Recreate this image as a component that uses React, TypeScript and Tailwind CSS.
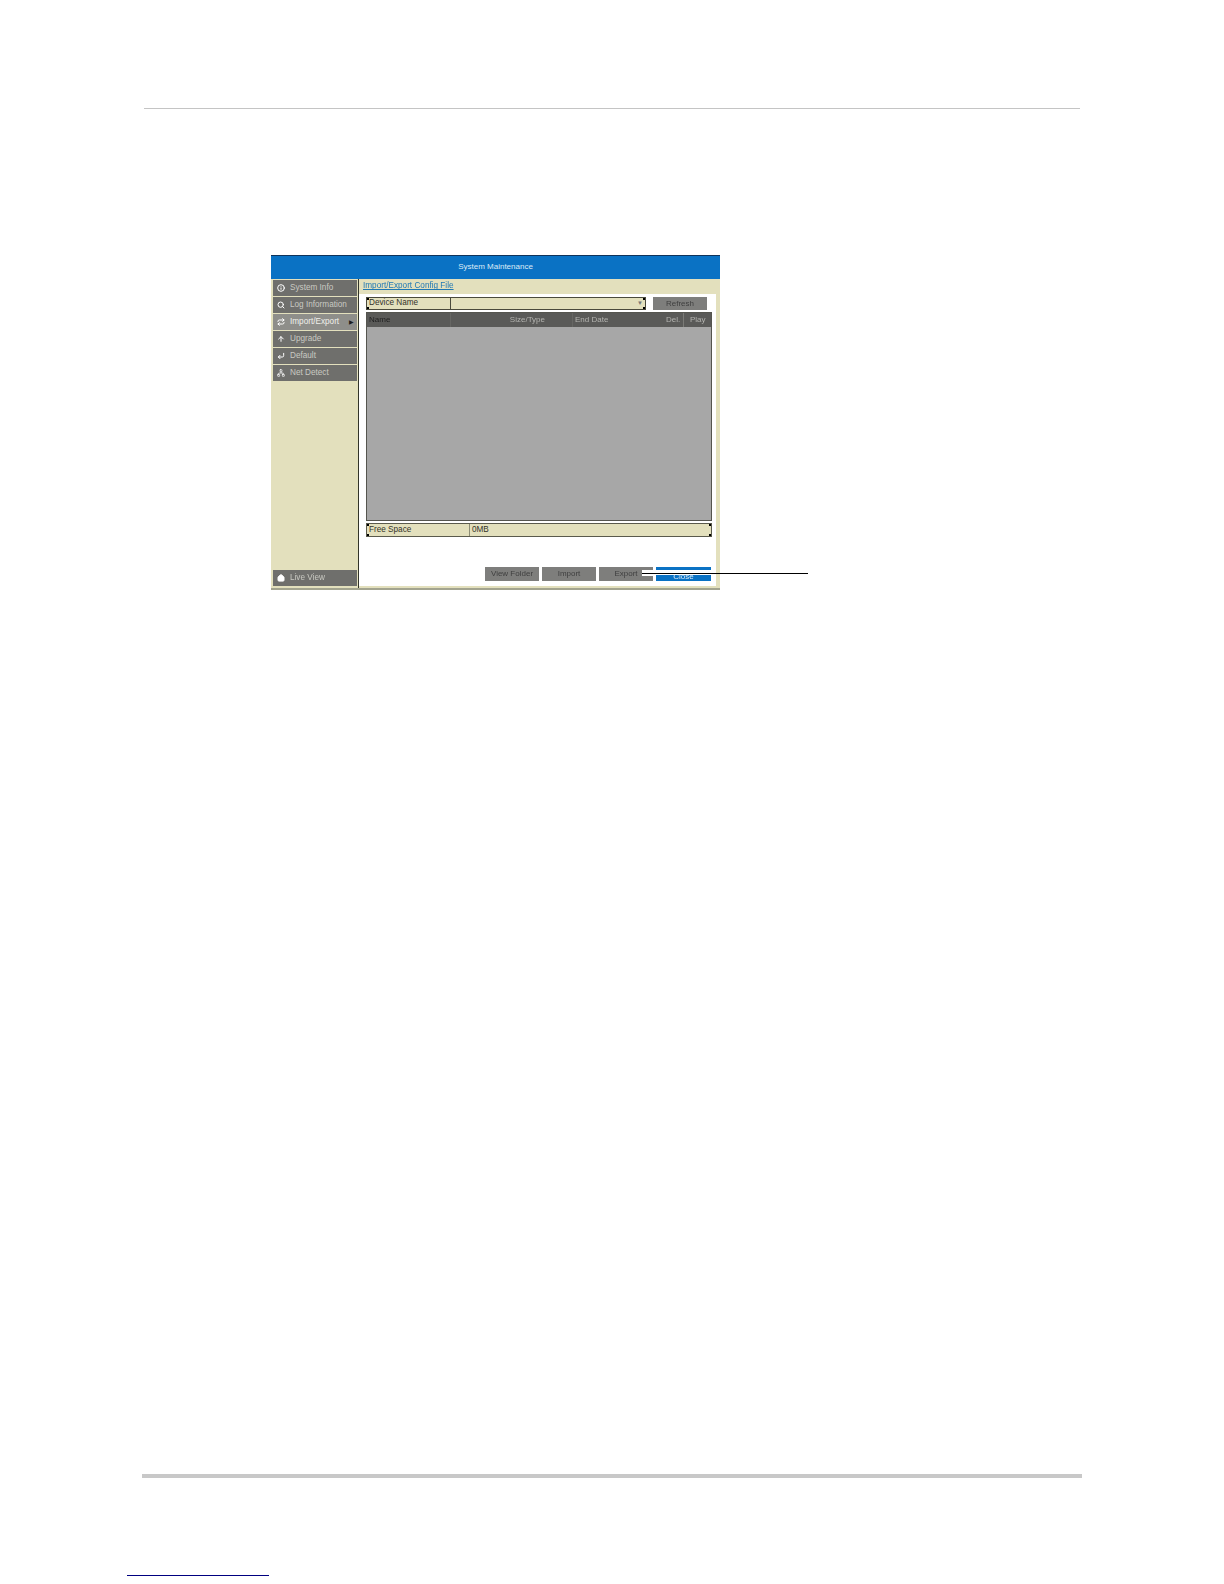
import { Home, Info, Search, Repeat, ArrowUp, CornerDownLeft, Network } from "lucide-react";
import type { ReactNode } from "react";

const font = "font-['Liberation_Sans',Arial,sans-serif]";

function NavItem({ icon, label, active }: { icon: ReactNode; label: string; active?: boolean }) {
  return (
    <div
      className={`flex items-center h-4 pl-[4px] text-[8.2px] ${
        active ? "bg-[#8e8e8a] text-[#f0f0ea]" : "bg-[#6f6f6c] text-[#c9c9c2]"
      }`}
    >
      <span className="w-[13px] text-white">{icon}</span>
      <span>{label}</span>
      {active && <span className="ml-auto mr-[3px] text-[6px] text-[#1c1c1c]">▶</span>}
    </div>
  );
}

function GrayButton({ children }: { children: ReactNode }) {
  return (
    <div className="flex items-center justify-center w-[54px] h-[14px] bg-[#7e7e7c] text-[8px] text-[#3f3f3f]">
      {children}
    </div>
  );
}

function Corners() {
  return (
    <>
      <span className="absolute left-0 top-0 w-[2px] h-[2px] bg-black" />
      <span className="absolute left-0 bottom-0 w-[2px] h-[2px] bg-black" />
      <span className="absolute right-0 top-0 w-[2px] h-[2px] bg-black" />
      <span className="absolute right-0 bottom-0 w-[2px] h-[2px] bg-black" />
    </>
  );
}

export default function App() {
  return (
    <div className={`w-[1224px] h-[1584px] bg-white flex flex-col ${font}`}>
      <div className="mt-[108px] ml-[144px] w-[936px] h-px bg-[#c4c4c4]" />

      <div className="relative mt-[146px] ml-[271px] w-[449px] h-[335px]">
        <div className="w-full h-full flex flex-col blur-[0.5px]">
          <div className="h-[24px] pb-[2px] bg-[#0a72c4] border-t border-[#10335a] flex items-center justify-center text-[8px] text-[#dcebf7]">
            System Maintenance
          </div>
          <div className="flex flex-1 min-h-0 bg-[#e3e0bd]">
            <div className="w-[87px] flex flex-col pl-[2px] pr-px pt-[1px] pb-[2px] gap-px">
              <NavItem icon={<Info size={8} strokeWidth={3} />} label="System Info" />
              <NavItem icon={<Search size={8} strokeWidth={3} />} label="Log Information" />
              <NavItem icon={<Repeat size={8} strokeWidth={3} />} label="Import/Export" active />
              <NavItem icon={<ArrowUp size={8} strokeWidth={3} />} label="Upgrade" />
              <NavItem icon={<CornerDownLeft size={8} strokeWidth={3} />} label="Default" />
              <NavItem icon={<Network size={8} strokeWidth={2} />} label="Net Detect" />
              <div className="flex-1" />
              <NavItem icon={<Home size={8} strokeWidth={3} fill="currentColor" />} label="Live View" />
            </div>
            <div className="w-px bg-[#33352a]" />
            <div className="flex-1 flex flex-col min-w-0">
              <div className="h-[15px] pl-[4px] flex items-center text-[8.2px] text-[#1f78b4] underline">
                Import/Export Config File
              </div>
              <div className="flex-1 mr-[4px] mb-[2px] bg-white flex flex-col pl-[7px] pr-[4px] pt-[3px]">
                <div className="flex items-stretch gap-[7px] h-[13px]">
                  <div className="relative w-[280px] flex border border-[#4a4a3c] bg-[#e3e0bd] text-[8.2px] text-[#33332a]">
                    <Corners />
                    <div className="w-[84px] pl-[2px] border-r border-[#4a4a3c] flex items-center">Device Name</div>
                    <div className="flex-1 flex items-center justify-end pr-[2px] text-[6px] text-[#777]">▼</div>
                  </div>
                  <div className="flex items-center justify-center w-[54px] bg-[#7e7e7c] text-[8px] text-[#3f3f3f]">Refresh</div>
                </div>

                <div className="mt-[2px] w-[346px] h-[209px] bg-[#a7a7a7] border border-[#55554f] flex flex-col">
                  <div className="h-[14px] bg-[#5a5a58] flex items-stretch text-[8px] text-[#b4b4b0] whitespace-nowrap">
                    <span className="w-[84px] pl-[2px] flex items-center text-[#202020] border-r border-[#666663]">Name</span>
                    <span className="w-[122px] pr-[27px] flex items-center justify-end border-r border-[#666663]">Size/Type</span>
                    <span className="w-[93px] pl-[2px] flex items-center">End Date</span>
                    <span className="w-[18px] flex items-center border-r border-[#7a7a76]">Del.</span>
                    <span className="pl-[6px] flex items-center">Play</span>
                  </div>
                </div>

                <div className="relative mt-[2px] w-[346px] h-[14px] flex border border-[#5a5a4c] bg-[#e3e0bd] text-[8.2px] text-[#33332a]">
                  <Corners />
                  <div className="w-[103px] pl-[2px] border-r border-[#8d8d75] flex items-center">Free Space</div>
                  <div className="pl-[2px] flex items-center">0MB</div>
                </div>

                <div className="flex-1" />

                <div className="flex justify-end gap-[3px] mb-[5px] pr-px">
                  <GrayButton>View Folder</GrayButton>
                  <GrayButton>Import</GrayButton>
                  <GrayButton>Export</GrayButton>
                  <div className="flex items-center justify-center w-[55px] h-[14px] pt-[5px] bg-[#0a72c4] text-[8px] text-[#dcebf7]">Close</div>
                </div>
              </div>
            </div>
          </div>
          <div className="h-[2px] bg-[#a3a48f]" />
        </div>
        {/* white patch and callout line sit over the Export / Close buttons */}
        <div className="absolute left-[371px] top-[315px] w-[14px] h-[6px] bg-white" />
        <div className="absolute left-[385px] top-[315px] w-[55px] h-[5px] bg-white" />
        <div className="absolute left-[371px] top-[318px] w-[166px] h-px bg-black" />
      </div>

      <div className="mt-[884px] ml-[142px] w-[940px] h-1 bg-[#c8c8c8]" />
      <div className="mt-[97px] ml-[127px] w-[142px] h-px bg-[#000080]" />
    </div>
  );
}
